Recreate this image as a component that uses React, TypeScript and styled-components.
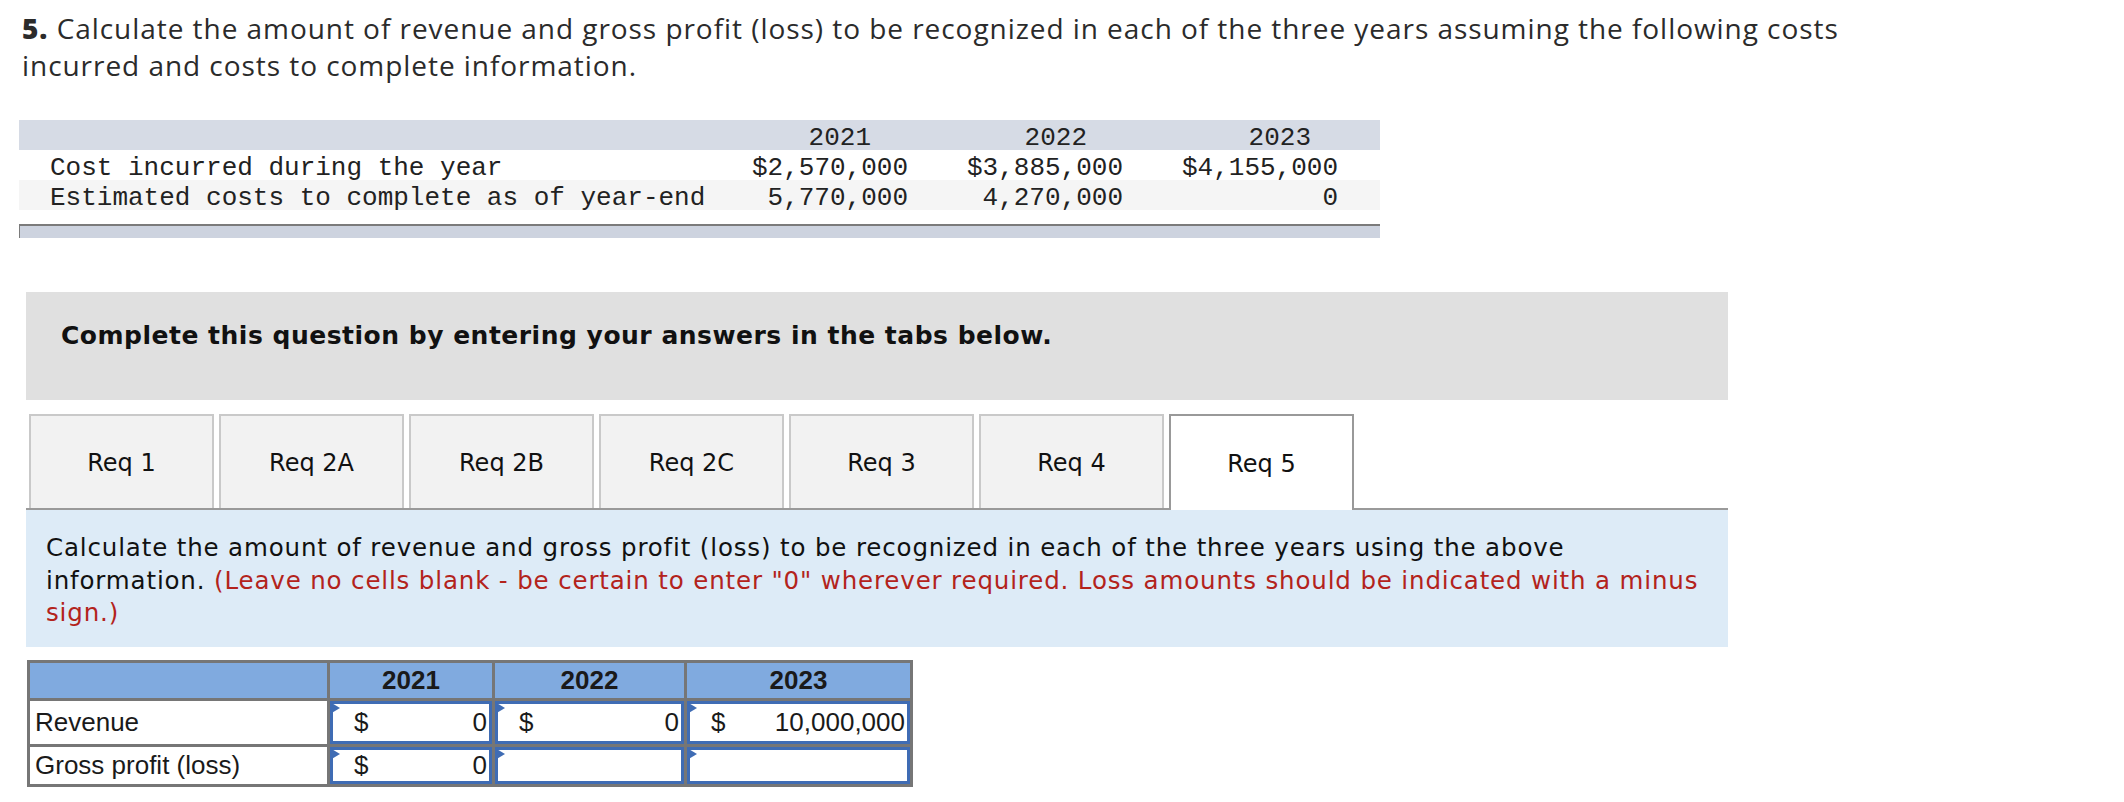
import styled, { createGlobalStyle } from 'styled-components';

const GlobalStyle = createGlobalStyle`
  body {
    margin: 0;
    background: #fff;
  }
`;

const Page = styled.div`
  width: 1702px;
  padding: 10px 0 20px 26px;
  color: #222;
`;

const Heading = styled.p`
  margin: 0 0 0 -4px;
  font-family: "Open Sans", Lato, sans-serif;
  font-size: 28px;
  line-height: 37px;
  letter-spacing: 0.95px;
  color: #2b2b2b;
  white-space: nowrap;

  b {
    font-weight: 800;
  }
`;

/* given data block (monospace) */
const DataTable = styled.div`
  width: 1361px;
  margin: 36px 0 0 -7px;
  font-family: "Liberation Mono", "Courier New", monospace;
  font-size: 26px;
  color: #222;
`;

const DataRow = styled.div<{ $bg: string }>`
  box-sizing: border-box;
  display: grid;
  grid-template-columns: 686px 215px 215px 245px;
  height: 30px;
  padding-top: 3px;
  line-height: 30px;
  background: ${props => props.$bg};
`;

const DataLabel = styled.div`
  padding-left: 31px;
  white-space: pre;
`;

const DataCell = styled.div<{ $pad: number }>`
  text-align: right;
  padding-right: ${props => props.$pad}px;
  white-space: pre;
`;

const DataFoot = styled.div`
  height: 12px;
  margin-top: 14px;
  border-top: 2px solid #7b7b7b;
  border-left: 1px solid #7b7b7b;
  background: #cdd3df;
`;

const Banner = styled.div`
  box-sizing: border-box;
  height: 108px;
  margin-top: 54px;
  padding: 29px 0 0 35px;
  background: #e0e0e0;
  font-family: "DejaVu Sans", Verdana, sans-serif;
  font-weight: 700;
  font-size: 25px;
  letter-spacing: 0.5px;
  line-height: 30px;
  color: #111;
`;

const TabStrip = styled.div`
  display: flex;
  align-items: flex-start;
  gap: 5px;
  height: 94px;
  margin-top: 14px;
  padding-left: 3px;
  border-bottom: 2px solid #9a9a9a;
`;

const Tab = styled.div<{ $active?: boolean }>`
  box-sizing: border-box;
  width: 185px;
  height: ${props => (props.$active ? 96 : 94)}px;
  display: flex;
  align-items: center;
  justify-content: center;
  padding-top: 2px;
  background: ${props => (props.$active ? '#fff' : '#f2f2f2')};
  border: 2px solid ${props => (props.$active ? '#999' : '#c9c9c9')};
  border-bottom: none;
  font-family: "DejaVu Sans", Verdana, sans-serif;
  font-size: 24px;
  color: #111;
`;

const Prompt = styled.div`
  padding: 22px 20px 17px 20px;
  background: #ddebf7;
  font-family: "DejaVu Sans", Verdana, sans-serif;
  font-size: 24.5px;
  letter-spacing: 0.85px;
  line-height: 32.5px;
  color: #111;
  white-space: nowrap;
`;

const Hint = styled.span`
  color: #b3231c;
`;

/* answer grid */
const Sheet = styled.div`
  display: grid;
  grid-template-columns: 297px 162px 189px 223px;
  grid-template-rows: 35px 43px 37px;
  gap: 3px;
  width: fit-content;
  margin: 13px 0 0 1px;
  padding: 3px;
  background: #767676;
  font-family: "Liberation Sans", Arial, sans-serif;
  font-size: 26px;
  color: #1a1a1a;
`;

const HeadCell = styled.div`
  display: flex;
  align-items: center;
  justify-content: center;
  background: #80aadf;
  font-weight: 700;
`;

const RowLabel = styled.div`
  display: flex;
  align-items: center;
  padding-left: 5px;
  background: #fff;
`;

const InputCell = styled.div`
  position: relative;
  box-sizing: border-box;
  display: flex;
  align-items: center;
  justify-content: space-between;
  padding: 0 2px 0 21px;
  background: #fff;
  border: 3px solid #3f6cb4;

  &::before {
    content: '';
    position: absolute;
    left: -3px;
    top: -2px;
    border-top: 6px solid transparent;
    border-bottom: 6px solid transparent;
    border-left: 10px solid #3f6cb4;
  }
`;

const years = ['2021', '2022', '2023'];
const yearPad = [49, 48, 69];
const amountPad = [12, 12, 42];

const given = [
  { label: 'Cost incurred during the year', values: ['$2,570,000', '$3,885,000', '$4,155,000'], bg: '#fff' },
  { label: 'Estimated costs to complete as of year-end', values: ['5,770,000', '4,270,000', '0'], bg: '#f5f5f5' },
];

const tabs = ['Req 1', 'Req 2A', 'Req 2B', 'Req 2C', 'Req 3', 'Req 4', 'Req 5'];

interface Answer {
  label: string;
  cells: (string | null)[];
}

const answers: Answer[] = [
  { label: 'Revenue', cells: ['0', '0', '10,000,000'] },
  { label: 'Gross profit (loss)', cells: ['0', null, null] },
];

export default function App() {
  return (
    <Page>
      <GlobalStyle />
      <Heading>
        <b>5.</b> Calculate the amount of revenue and gross profit (loss) to be recognized in each of the three years assuming the following costs
        <br />
        incurred and costs to complete information.
      </Heading>

      <DataTable>
        <DataRow $bg="#d6dbe5">
          <DataLabel />
          {years.map((y, i) => (
            <DataCell key={y} $pad={yearPad[i]}>{y}</DataCell>
          ))}
        </DataRow>
        {given.map(row => (
          <DataRow key={row.label} $bg={row.bg}>
            <DataLabel>{row.label}</DataLabel>
            {row.values.map((v, i) => (
              <DataCell key={i} $pad={amountPad[i]}>{v}</DataCell>
            ))}
          </DataRow>
        ))}
        <DataFoot />
      </DataTable>

      <Banner>Complete this question by entering your answers in the tabs below.</Banner>

      <TabStrip>
        {tabs.map(t => (
          <Tab key={t} $active={t === 'Req 5'}>{t}</Tab>
        ))}
      </TabStrip>

      <Prompt>
        Calculate the amount of revenue and gross profit (loss) to be recognized in each of the three years using the above
        <br />
        information. <Hint>(Leave no cells blank - be certain to enter "0" wherever required. Loss amounts should be indicated with a minus</Hint>
        <br />
        <Hint>sign.)</Hint>
      </Prompt>

      <Sheet>
        <HeadCell />
        {years.map(y => (
          <HeadCell key={y}>{y}</HeadCell>
        ))}
        {answers.map(row => (
          <>
            <RowLabel key={row.label}>{row.label}</RowLabel>
            {row.cells.map((c, i) => (
              <InputCell key={row.label + i}>
                {c !== null && (
                  <>
                    <span>$</span>
                    <span>{c}</span>
                  </>
                )}
              </InputCell>
            ))}
          </>
        ))}
      </Sheet>
    </Page>
  );
}
